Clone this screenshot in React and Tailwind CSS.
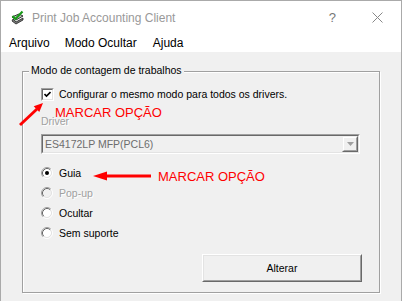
import React from "react";

const font = { fontFamily: '"Liberation Sans", Arial, sans-serif' };

const Radio = ({ checked = false, disabled = false }) => (
  <svg width="12" height="12" viewBox="0 0 12 12" className="shrink-0">
    <circle cx="6" cy="6" r="4" fill={disabled ? "#f0f0f0" : "#ffffff"} />
    <path d="M2.11 9.89 A5.5 5.5 0 0 1 9.89 2.11" fill="none" stroke="#a0a0a0" />
    <path d="M9.89 2.11 A5.5 5.5 0 0 1 2.11 9.89" fill="none" stroke="#ffffff" />
    <path d="M2.82 9.18 A4.5 4.5 0 0 1 9.18 2.82" fill="none" stroke="#696969" />
    <path d="M9.18 2.82 A4.5 4.5 0 0 1 2.82 9.18" fill="none" stroke="#e3e3e3" />
    {checked && <circle cx="6" cy="6" r="2" fill="#000000" />}
  </svg>
);

const RadioRow = ({ label, checked, disabled }) => (
  <div className="flex h-[20px] items-center gap-[6px]">
    <Radio checked={checked} disabled={disabled} />
    <span
      className={
        disabled
          ? "text-[10.5px] leading-[13px] text-[#a0a0a0] [text-shadow:1px_1px_0_#fff]"
          : "text-[10.5px] leading-[13px] text-black"
      }
    >
      {label}
    </span>
  </div>
);

const App = () => {
  return (
    <div
      style={font}
      className="relative flex h-[301px] w-[402px] flex-col overflow-hidden border-x border-t border-[#aaaaaa] bg-[#f0f0f0]"
    >
      {/* title bar */}
      <div className="flex h-[33px] shrink-0 items-center bg-white">
        <svg width="15" height="15" viewBox="0 0 15 15" className="ml-[9px]">
          <path d="M2 7 L9 4 L13 6 L6 10 Z" fill="#c8c8c8" stroke="#333" strokeWidth="1" />
          <path d="M3 9 L6 12 L13 8 L13 10 L6 14 L2 11 Z" fill="#7a7a7a" stroke="#222" strokeWidth="0.8" />
          <path d="M2.5 6 L5.5 9 L12.5 1.5" fill="none" stroke="#1a9a1a" strokeWidth="2.2" />
        </svg>
        <span className="ml-[7px] text-[12px] text-[#999999]">Print Job Accounting Client</span>
        <span className="ml-auto mr-[36px] text-[13px] text-[#777777]">?</span>
        <svg width="11" height="11" viewBox="0 0 11 11" className="mr-[18px]">
          <path d="M0.5 0.5 L10.5 10.5 M10.5 0.5 L0.5 10.5" stroke="#888888" strokeWidth="1" />
        </svg>
      </div>

      {/* menu bar */}
      <div className="flex h-[18px] shrink-0 items-center gap-[15px] bg-white pl-[8px] text-[12px] text-black">
        <span>Arquivo</span>
        <span>Modo Ocultar</span>
        <span className="ml-px">Ajuda</span>
      </div>

      {/* group box */}
      <div className="relative mx-[21px] mt-[19px] flex h-[222px] flex-col border border-[#a0a0a0] pl-[18px] pt-[16px] shadow-[1px_1px_0_#fff,inset_1px_1px_0_#fff]">
        <span className="absolute left-[6px] top-[-8px] bg-[#f0f0f0] px-[2px] text-[10.5px] leading-[13px] text-black">
          Modo de contagem de trabalhos
        </span>

        <div className="flex h-[13px] items-center gap-[5px]">
          <span className="flex h-[13px] w-[13px] border border-b-white border-l-[#a0a0a0] border-r-white border-t-[#a0a0a0]">
            <span className="flex flex-1 items-center justify-center border border-b-[#e3e3e3] border-l-[#696969] border-r-[#e3e3e3] border-t-[#696969] bg-white">
              <svg width="7" height="7" viewBox="0 0 7 7">
                <path d="M0.5 3 L2.5 5 L6.5 1" fill="none" stroke="#000" strokeWidth="1.6" />
              </svg>
            </span>
          </span>
          <span className="text-[10.5px] leading-[13px] text-black">
            Configurar o mesmo modo para todos os drivers.
          </span>
        </div>

        <span className="mt-[14px] h-[13px] text-[10.5px] leading-[13px] text-[#a0a0a0] [text-shadow:1px_1px_0_#fff]">
          Driver
        </span>

        <div className="mt-[6px] flex h-[20px] w-[319px] border border-b-white border-l-[#a0a0a0] border-r-white border-t-[#a0a0a0]">
          <div className="flex flex-1 items-center border border-b-[#e3e3e3] border-l-[#696969] border-r-[#e3e3e3] border-t-[#696969] bg-[#f0f0f0]">
            <span className="pl-[2px] text-[10.5px] leading-[13px] text-[#6d6d6d]">ES4172LP MFP(PCL6)</span>
            <div className="ml-auto flex h-full w-[16px] border border-b-[#696969] border-l-[#f0f0f0] border-r-[#696969] border-t-[#f0f0f0]">
              <div className="flex flex-1 items-center justify-center border border-b-[#a0a0a0] border-l-white border-r-[#a0a0a0] border-t-white">
                <svg width="7" height="4" viewBox="0 0 7 4">
                  <path d="M0 0 L7 0 L3.5 4 Z" fill="#a0a0a0" />
                </svg>
              </div>
            </div>
          </div>
        </div>

        <div className="mt-[9px] flex flex-col">
          <RadioRow label="Guia" checked />
          <RadioRow label="Pop-up" disabled />
          <RadioRow label="Ocultar" />
          <RadioRow label="Sem suporte" />
        </div>

        <div className="mr-[17px] mt-[11px] flex justify-end">
          <button className="flex h-[28px] w-[160px] border border-b-[#696969] border-l-white border-r-[#696969] border-t-white bg-[#f0f0f0]">
            <span className="flex flex-1 items-center justify-center border border-b-[#a0a0a0] border-l-[#e3e3e3] border-r-[#a0a0a0] border-t-[#e3e3e3] text-[10.5px] leading-[13px] text-black">
              Alterar
            </span>
          </button>
        </div>
      </div>

      {/* annotations */}
      <span className="absolute left-[54px] top-[104px] text-[13px] leading-[15px] text-[#ff0000]">
        MARCAR OPÇÃO
      </span>
      <span className="absolute left-[157px] top-[168px] text-[13px] leading-[15px] text-[#ff0000]">
        MARCAR OPÇÃO
      </span>
      <svg
        width="402"
        height="301"
        viewBox="0 0 402 301"
        className="pointer-events-none absolute left-0 top-0"
      >
        <line x1="19" y1="124" x2="36" y2="108" stroke="#ff0000" strokeWidth="3" />
        <polygon points="42,102 38.3,111.1 32.7,105.3" fill="#ff0000" />
        <line x1="103" y1="175" x2="150" y2="175" stroke="#ff0000" strokeWidth="3" />
        <polygon points="92,175 106,170.5 106,179.5" fill="#ff0000" />
      </svg>
    </div>
  );
};

export default App;
